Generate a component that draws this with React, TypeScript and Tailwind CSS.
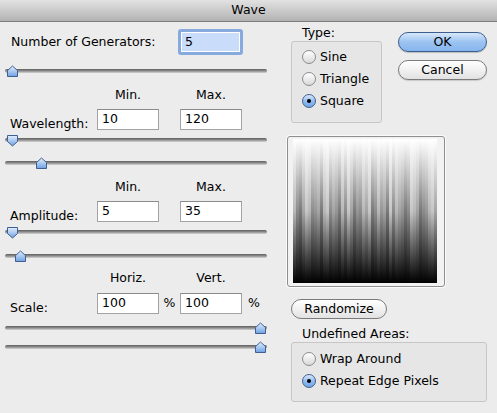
import React from "react";

const FONT = { fontFamily: '"DejaVu Sans", "Liberation Sans", sans-serif' };

// stripe brightness variants for the wave preview
const STRIPES = [2, 0, 3, 1, 4, 2, 0, 5, 1, 3, 2, 4, 0, 1, 5, 3, 2, 0, 4, 1, 3, 5, 0, 2, 1, 4, 3, 0, 2, 5, 1, 3, 4, 0, 2, 1, 5, 3, 0, 4, 2, 1, 3, 0, 5, 2, 4, 1];
const MIDS = ["#8c8c8c", "#a4a4a4", "#b8b8b8", "#7a7a7a", "#c6c6c6", "#969696"];

function Thumb({ x, down }: { x: number; down?: boolean }) {
  return (
    <svg
      width="13"
      height="13"
      viewBox="0 0 13 13"
      className="absolute top-[1px]"
      style={{ left: x }}
    >
      <defs>
        <linearGradient id={down ? "thd" : "thu"} x1="0" y1="0" x2="0" y2="1">
          <stop offset="0" stopColor="#e3eefc" />
          <stop offset="0.5" stopColor="#a9c9f1" />
          <stop offset="1" stopColor="#6f9fe0" />
        </linearGradient>
      </defs>
      <path
        d={
          down
            ? "M1.5 1.5 H11.5 V7.5 L6.5 12 L1.5 7.5 Z"
            : "M6.5 1 L11.5 5.5 V11.5 H1.5 V5.5 Z"
        }
        fill={`url(#${down ? "thd" : "thu"})`}
        stroke="#3f5f90"
        strokeWidth="1"
        strokeLinejoin="round"
      />
    </svg>
  );
}

function Slider({ x, down }: { x: number; down?: boolean }) {
  return (
    <div className="relative ml-[5px] h-[14px] w-[262px]">
      <div className="absolute left-0 right-0 top-[5px] h-[4px] rounded-full bg-gradient-to-b from-[#5e5e5e] via-[#8e8e8e] to-[#d6d6d6]" />
      <Thumb x={x} down={down} />
    </div>
  );
}

function Field({ value, focused }: { value: string; focused?: boolean }) {
  if (focused) {
    return (
      <div className="flex h-[26px] w-[65px] rounded-[3px] bg-[#86aade] p-[3px]">
        <div className="flex h-full w-full items-center border border-white bg-[#c9dcf9] pl-[3px] text-[12.5px] text-black">
          {value}
        </div>
      </div>
    );
  }
  return (
    <div className="flex h-[21px] w-[62px] items-center border border-[#a3a3a3] border-t-[#8a8a8a] bg-white pl-[4px] text-[12.5px] leading-none text-black">
      {value}
    </div>
  );
}

function Radio({ checked, label }: { checked?: boolean; label: string }) {
  return (
    <div className="flex h-[22px] items-center gap-[4px] pl-[10px]">
      <div
        className={
          checked
            ? "flex h-[14px] w-[14px] items-center justify-center rounded-full border border-[#3f5f90] bg-gradient-to-b from-[#d9e8fb] via-[#93bdf0] to-[#6fa4e6]"
            : "h-[14px] w-[14px] rounded-full border border-[#8c8c8c] bg-gradient-to-b from-[#ffffff] to-[#d9d9d9]"
        }
      >
        {checked && <div className="h-[4px] w-[4px] rounded-full bg-black" />}
      </div>
      <span className="text-[12.5px] text-black">{label}</span>
    </div>
  );
}

function Preview() {
  return (
    <svg width="144" height="144" viewBox="0 0 144 144">
      <defs>
        {MIDS.map((m, i) => (
          <linearGradient key={i} id={`st${i}`} x1="0" y1="0" x2="0" y2="1">
            <stop offset="0" stopColor="#ffffff" />
            <stop offset="0.5" stopColor={m} />
            <stop offset="1" stopColor="#000000" />
          </linearGradient>
        ))}
      </defs>
      {STRIPES.map((k, i) => (
        <rect key={i} x={i * 3} y="0" width="3" height="144" fill={`url(#st${k})`} />
      ))}
    </svg>
  );
}

export default function App() {
  return (
    <div className="flex h-[413px] w-[497px] flex-col overflow-hidden bg-[#ececec] text-black" style={FONT}>
      {/* title bar */}
      <div className="flex h-[22px] shrink-0 items-center justify-center border-b border-[#7c7c7c] bg-gradient-to-b from-[#e2e2e2] to-[#b3b3b3] text-[12.5px]">
        Wave
      </div>

      <div className="flex">
        {/* left column */}
        <div className="flex w-[286px] shrink-0 flex-col">
          <div className="mt-[7px] flex h-[26px] items-center pl-[11px]">
            <span className="w-[167px] text-[12.5px]">Number of Generators:</span>
            <Field value="5" focused />
          </div>
          <div className="mt-[9px]">
            <Slider x={1} />
          </div>

          <div className="mt-[9px] flex h-[16px] items-center pl-[97px] text-[12.5px]">
            <span className="w-[62px] text-center">Min.</span>
            <span className="ml-[21px] w-[62px] text-center">Max.</span>
          </div>
          <div className="mt-[6px] flex h-[21px] items-start pl-[10px]">
            <span className="mt-[7px] w-[87px] text-[12.5px] leading-[16px]">Wavelength:</span>
            <Field value="10" />
            <div className="ml-[21px]">
              <Field value="120" />
            </div>
          </div>
          <div className="mt-[3px]">
            <Slider x={1} down />
          </div>
          <div className="mt-[9px]">
            <Slider x={30} />
          </div>

          <div className="mt-[9px] flex h-[16px] items-center pl-[97px] text-[12.5px]">
            <span className="w-[62px] text-center">Min.</span>
            <span className="ml-[21px] w-[62px] text-center">Max.</span>
          </div>
          <div className="mt-[6px] flex h-[21px] items-start pl-[10px]">
            <span className="mt-[7px] w-[87px] text-[12.5px] leading-[16px]">Amplitude:</span>
            <Field value="5" />
            <div className="ml-[21px]">
              <Field value="35" />
            </div>
          </div>
          <div className="mt-[3px]">
            <Slider x={1} down />
          </div>
          <div className="mt-[10px]">
            <Slider x={9} />
          </div>

          <div className="mt-[7px] flex h-[16px] items-center pl-[97px] text-[12.5px]">
            <span className="w-[62px] text-center">Horiz.</span>
            <span className="ml-[21px] w-[62px] text-center">Vert.</span>
          </div>
          <div className="mt-[7px] flex h-[21px] items-start pl-[10px]">
            <span className="mt-[7px] w-[87px] text-[12.5px] leading-[16px]">Scale:</span>
            <Field value="100" />
            <span className="flex h-[21px] w-[21px] items-center justify-center text-[12.5px]">%</span>
            <Field value="100" />
            <span className="ml-[6px] flex h-[21px] items-center text-[12.5px]">%</span>
          </div>
          <div className="mt-[7px]">
            <Slider x={249} />
          </div>
          <div className="mt-[5px]">
            <Slider x={249} />
          </div>
        </div>

        {/* right column */}
        <div className="flex flex-1 flex-col">
          <div className="flex">
            <div className="ml-[5px] flex w-[91px] flex-col">
              <span className="mt-[3px] pl-[11px] text-[12.5px] leading-[16px]">Type:</span>
              <div className="flex h-[82px] flex-col rounded-[3px] border border-[#c6c6c6] bg-[#e6e6e6] pt-[4px]">
                <Radio label="Sine" />
                <Radio label="Triangle" />
                <Radio checked label="Square" />
              </div>
            </div>
            <div className="ml-[16px] mt-[10px] flex w-[89px] flex-col gap-[8px]">
              <button className="h-[20px] rounded-full border border-[#3d5e8e] bg-gradient-to-b from-[#d7e7fb] via-[#9cc3f1] to-[#86b6ee] text-[12.5px] leading-none text-black shadow-[0_1px_1px_rgba(0,0,0,0.2)]">
                OK
              </button>
              <button className="h-[20px] rounded-full border border-[#7b7b7b] bg-gradient-to-b from-[#ffffff] via-[#f1f1f1] to-[#e2e2e2] text-[12.5px] leading-none text-black shadow-[0_1px_1px_rgba(0,0,0,0.15)]">
                Cancel
              </button>
            </div>
          </div>

          <div className="ml-[1px] mt-[13px] flex h-[151px] w-[158px] rounded-[3px] border border-[#8e8e8e] bg-[#f2f2f2] pl-[5px] pt-[2px] shadow-[0_0_0_1px_#fafafa]">
            <Preview />
          </div>

          <button className="ml-[5px] mt-[12px] h-[20px] w-[96px] rounded-full border border-[#7b7b7b] bg-gradient-to-b from-[#ffffff] via-[#f1f1f1] to-[#e2e2e2] text-[12.5px] leading-none text-black">
            Randomize
          </button>

          <span className="mt-[7px] pl-[16px] text-[12.5px] leading-[16px]">Undefined Areas:</span>
          <div className="ml-[5px] flex h-[60px] w-[196px] flex-col rounded-[3px] border border-[#c6c6c6] bg-[#e6e6e6] pt-[5px]">
            <Radio label="Wrap Around" />
            <Radio checked label="Repeat Edge Pixels" />
          </div>
        </div>
      </div>
    </div>
  );
}
